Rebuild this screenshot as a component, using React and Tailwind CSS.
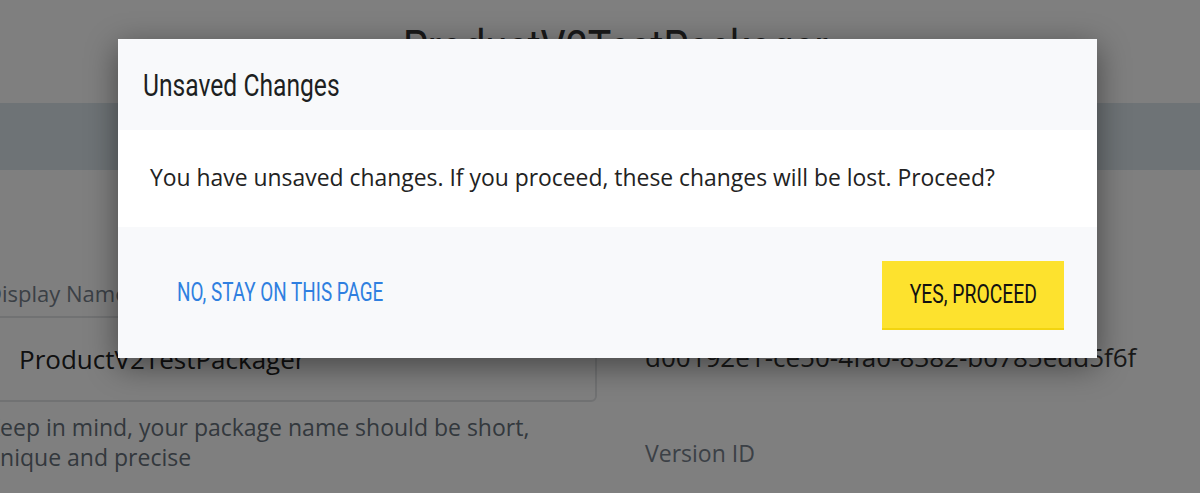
import React from "react";

// no condensed family is installed, so Roboto is narrowed with scale-x
const condensed = "font-['Roboto','Liberation_Sans',sans-serif] inline-block";

function PageBehind() {
    return (
        <div className="w-full h-[493px] overflow-hidden bg-white font-['Open_Sans','Liberation_Sans',sans-serif]">
            <div className="pl-[403px] pt-[18px] h-[103px]">
                <h1 className={`${condensed} origin-left scale-x-[0.82] text-[48px] leading-[60px] text-[#333] whitespace-nowrap`}>ProductV2TestPackager</h1>
            </div>
            <div className="h-[67px] bg-[#dde7ed]"></div>
            <div className="flex gap-[48px] ml-[-14px] pt-[108px]">
                <div className="w-[611px] flex flex-col">
                    <label className="text-[22px] text-[#77818c] leading-[30px]">Display Name</label>
                    <div className="mt-[8px] h-[86px] border-2 border-[#e2e4e6] rounded-md flex items-center pl-[31px] text-[26px] text-[#222]">
                        ProductV2TestPackager
                    </div>
                    <p className="mt-[10px] text-[23px] leading-[30px] text-[#66707a] w-[560px]">
                        Keep in mind, your package name should be short, unique and precise
                    </p>
                </div>
                <div className="flex flex-col pt-[62px]">
                    <span className="text-[26px] leading-[34px] text-[#333] whitespace-nowrap">d00192e1-ce50-4fa0-8382-b0785edd5f6f</span>
                    <span className="mt-[64px] text-[23px] leading-[30px] text-[#77818c]">Version ID</span>
                </div>
            </div>
        </div>
    );
}

function UnsavedModal() {
    return (
        <div className="ml-[118px] mt-[39px] w-[979px] bg-white shadow-[0_8px_30px_rgba(0,0,0,0.45)]">
            <div className="h-[91px] bg-[#f8f9fb] flex items-center pl-[25px]">
                <h2 className={`${condensed} origin-left scale-x-[0.77] text-[32px] text-[#1d1f22] whitespace-nowrap`}>Unsaved Changes</h2>
            </div>
            <div className="h-[97px] flex items-center pl-[32px] font-['Open_Sans','Liberation_Sans',sans-serif] text-[22.9px] text-[#222] whitespace-nowrap">
                You have unsaved changes. If you proceed, these changes will be lost. Proceed?
            </div>
            <div className="h-[131px] bg-[#f8f9fb] flex items-center justify-between pl-[59px] pr-[33px]">
                <button className="h-[40px] flex items-center">
                    <span className={`${condensed} origin-left scale-x-[0.756] text-[25px] text-[#2f7fe0] whitespace-nowrap`}>NO, STAY ON THIS PAGE</span>
                </button>
                <button className="mt-[6px] w-[182px] h-[69px] bg-[#fde22e] border-b-2 border-[#f2d410] flex items-center justify-center">
                    <span className={`${condensed} scale-x-[0.773] text-[25px] text-[#111] whitespace-nowrap`}>YES, PROCEED</span>
                </button>
            </div>
        </div>
    );
}

export default function App() {
    return (
        <div className="relative w-[1200px] h-[493px] overflow-hidden">
            <PageBehind />
            <div className="absolute inset-0 bg-black/50">
                <UnsavedModal />
            </div>
        </div>
    );
}
